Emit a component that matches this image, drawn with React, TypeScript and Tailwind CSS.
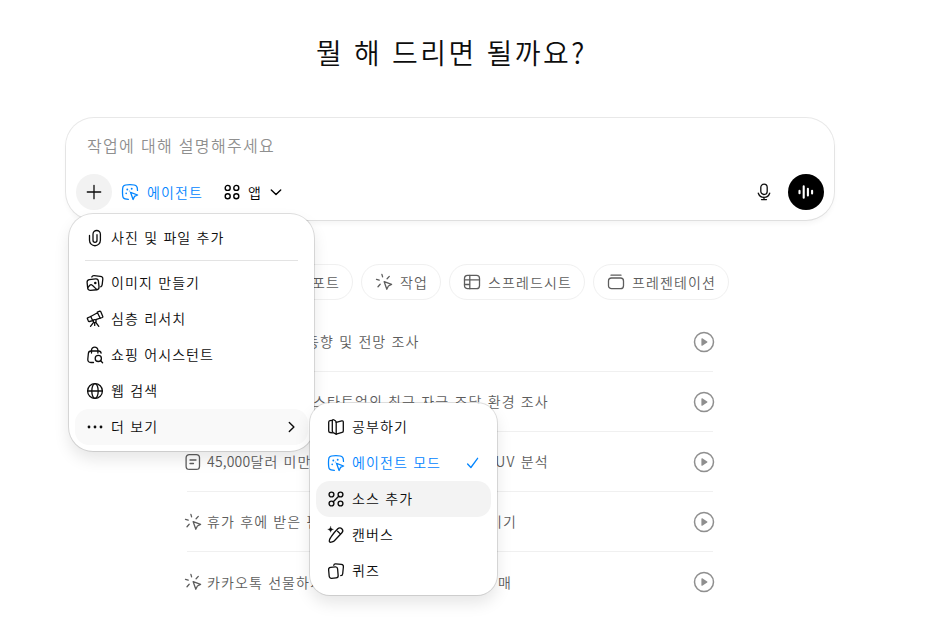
import React from "react";

type IconProps = { className?: string };

function Svg({ className = "", children, w = 1.3 }: { className?: string; children: React.ReactNode; w?: number }) {
  return (
    <svg
      width="20"
      height="20"
      viewBox="0 0 20 20"
      fill="none"
      stroke="currentColor"
      strokeWidth={w}
      strokeLinecap="round"
      strokeLinejoin="round"
      className={`shrink-0 ${className}`}
    >
      {children}
    </svg>
  );
}

const PlusIcon = () => (
  <Svg w={1.3}>
    <path d="M10 3.3v13.4M3.3 10h13.4" />
  </Svg>
);

const AgentIcon = ({ className }: IconProps) => (
  <Svg className={className}>
    <path d="M8.400 17.300C5.200 17.200 4.200 16.900 3.400 15.900 2.500 14.800 2.500 13 2.500 10s0-4.800.9-5.900C4.400 2.800 6.300 2.700 10 2.700s5.400.1 6.500 1.400c.8.900 1 2.300 1 4.300" />
    <path d="m10.500 10.300 7.100 2.700-3.100 1.400-1.400 3.100z" />
    <g fill="currentColor" stroke="none">
      <circle cx="7.300" cy="7.500" r=".95" />
      <circle cx="11.700" cy="6.700" r=".95" />
      <circle cx="6.200" cy="11.400" r=".8" />
      <circle cx="9.300" cy="9" r=".5" />
    </g>
  </Svg>
);

const AppsIcon = () => (
  <Svg w={1.4}>
    <circle cx="5.700" cy="5.900" r="2.500" />
    <circle cx="14.300" cy="5.900" r="2.500" />
    <circle cx="5.700" cy="14.300" r="2.500" />
    <circle cx="14.300" cy="14.300" r="2.500" />
  </Svg>
);

const SourcesIcon = () => (
  <Svg w={1.4}>
    <circle cx="5.500" cy="5.500" r="2.400" />
    <circle cx="14.500" cy="5.500" r="2.400" />
    <circle cx="5.500" cy="14.500" r="2.400" />
    <circle cx="14.500" cy="14.500" r="2.400" />
    <path d="m7.300 12.700 5.400-5.400" />
  </Svg>
);

const ChevronDown = () => (
  <Svg w={1.4}>
    <path d="m5.300 8 4.700 4.500L14.700 8" />
  </Svg>
);

const ChevronRight = () => (
  <Svg w={1.4}>
    <path d="m7.300 5.400 4.600 4.600-4.600 4.600" />
  </Svg>
);

const CheckIcon = () => (
  <Svg>
    <path d="m4.600 11 3.300 3.500 6.700-9.200" />
  </Svg>
);

const MicIcon = () => (
  <Svg w={1.3}>
    <rect x="6.800" y="2.200" width="6.400" height="10.300" rx="3.200" />
    <path d="M4.300 11.200c.8 2.500 2.900 4.100 5.700 4.100s4.900-1.600 5.700-4.100M10 15.300v2.300M7.500 17.600h5" />
  </Svg>
);

const VoiceIcon = () => (
  <Svg w={2.1}>
    <path d="M3.500 8.900v2.400M7.700 4.400v11.400M11.900 6.800v6.600M16.100 8.800v2.600" />
  </Svg>
);

const ClipIcon = () => (
  <Svg>
    <path d="M4.500 7.500v4.800a5.400 5.400 0 0 0 10.900 0V6.200a3.700 3.700 0 0 0-7.400 0v6.100a2 2 0 0 0 4 0V6.700" />
  </Svg>
);

const ImagesIcon = () => (
  <Svg>
    <rect x="2.400" y="6.200" width="11.400" height="10.900" rx="2.600" transform="rotate(-6 8 12)" />
    <path d="M6.800 4c.4-1.100 1.200-1.500 2.400-1.400l6 .7c1.900.2 2.800 1.100 2.600 2.900l-.6 5.200c-.1 1.300-.6 2-1.500 2.400" />
    <path d="m2.800 14.600 2-2.300c.8-.8 1.700-.8 2.500 0l4.600 4.300" />
    <circle cx="10.300" cy="9.900" r=".6" fill="currentColor" />
  </Svg>
);

const TelescopeIcon = () => (
  <Svg>
    <path d="m5.700 7.500 6.800-3.700 2.700 5.400-7.400 2.500z" />
    <path d="m12.300 3.100 2.500-.9c.5-.1.700.1.900.4l2.100 4.900c.2.500 0 .8-.4 1l-2.200.7M5.700 7.500l-3 1.300c-.4.200-.5.600-.3 1l1 2.300c.2.400.6.500 1 .4l3.400-.8" />
    <circle cx="9.700" cy="12.100" r="1.500" fill="white" />
    <path d="m8.600 13.300-3.100 4M10.800 13.300l3 4M9.700 13.700v2.700" />
  </Svg>
);

const ShoppingIcon = () => (
  <Svg>
    <path d="M8.500 17.500H5.900c-2.100 0-3.300-1.200-3.100-3.200l.6-6c.2-1.600 1-2.300 2.600-2.300h7.600c1.500 0 2.300.7 2.500 2.100" />
    <path d="M6.500 8V5.300a3.200 3.200 0 0 1 6.400 0V8" />
    <circle cx="13.300" cy="13.400" r="3.100" />
    <path d="m15.600 15.700 2 2" />
  </Svg>
);

const GlobeIcon = () => (
  <Svg>
    <circle cx="10" cy="10" r="7.400" />
    <ellipse cx="10" cy="10" rx="3.200" ry="7.400" />
    <path d="M2.700 10h14.600" />
  </Svg>
);

const MoreIcon = () => (
  <Svg>
    <g fill="currentColor" stroke="none">
      <circle cx="4" cy="10" r="1.400" />
      <circle cx="10" cy="10" r="1.400" />
      <circle cx="16" cy="10" r="1.400" />
    </g>
  </Svg>
);

const BookIcon = () => (
  <Svg>
    <path d="M6.300 3.300 4 3.700c-.9.200-1.300.6-1.300 1.500v8.900c0 .9.400 1.300 1.300 1.400l2.300.4" />
    <path d="M6.300 4.100c0-1.400.7-1.800 1.800-1.100l1.200.8c.6.400.9.900.9 1.700v11.800l-3-1.700c-.6-.4-.9-.8-.9-1.600z" />
    <path d="m10.200 5.300 5.500-1.400c1-.2 1.600.2 1.600 1.200v8.800c0 .8-.4 1.300-1.200 1.500l-5.900 1.800" />
  </Svg>
);

const CanvasIcon = () => (
  <Svg>
    <path d="m8.300 7.500 3.500-3.700c1.200-1.200 2.800-1.300 4-.1s1.200 2.900.1 4.100l-7.500 8c-.8.800-3.600 1.700-4.600 1.400-.6-.2-.6-1.100-.4-2 .3-1.300.8-2.200 1.500-3z" />
    <path d="m11.600 6.300 2.700 2.600" />
    <path
      d="M4.600 1.500c.4 1.900 1 2.500 2.900 2.900-1.900.4-2.500 1-2.900 2.900-.4-1.900-1-2.500-2.900-2.900 1.900-.4 2.500-1 2.900-2.900z"
      fill="currentColor"
      strokeWidth=".3"
    />
  </Svg>
);

const QuizIcon = () => (
  <Svg>
    <rect x="2.900" y="6.100" width="9" height="11" rx="2.200" transform="rotate(-5 7.400 11.700)" />
    <path d="M7.800 4.300c.1-1.100.8-1.600 1.900-1.500l5.700.6c1.400.2 2.100.9 2 2.300l-.7 7c-.1 1.300-.8 1.900-2 1.900" />
  </Svg>
);

const TaskIcon = () => (
  <Svg w={1.300}>
    <path d="m10.200 9.700 7.400 2.700-3.200 1.600-1.600 3.200z" />
    <path d="M7.900 2.400l.7 2.500M2.500 7.300l2.700.9M15.300 4.400l-2.200 2.400M6.200 12.200l-2.200 2.500" />
  </Svg>
);

const SheetIcon = () => (
  <Svg w={1.3}>
    <rect x="2.500" y="3.300" width="15" height="13.400" rx="3" />
    <path d="M2.500 7.900h15M7.800 3.300v13.400M2.500 12.500h5.300" />
  </Svg>
);

const SlidesIcon = () => (
  <Svg w={1.3}>
    <rect x="2.500" y="6" width="15" height="10.700" rx="3" />
    <path d="M5 3.200h10" />
  </Svg>
);

const DocIcon = () => (
  <Svg w={1.3}>
    <rect x="3.100" y="2.600" width="13.400" height="14.800" rx="3.200" />
    <path d="M7 8h6M7 11.500h3.500" />
  </Svg>
);

const PlayIcon = () => (
  <svg width="22" height="22" viewBox="0 0 22 22" fill="none" className="shrink-0 text-[#8f8f8f]">
    <circle cx="11" cy="11" r="9.500" stroke="currentColor" strokeWidth="1.500" />
    <path d="M8.400 7.800v6.400c0 .5.500.8.900.5l4.900-3.100c.4-.3.400-.9 0-1.200l-4.900-3.100c-.4-.3-.9 0-.9.500z" fill="currentColor" />
  </svg>
);

function Chip({ icon, label, width }: { icon: React.ReactNode; label: string; width: string }) {
  return (
    <button className={`flex h-9 shrink-0 items-center gap-1.5 rounded-full border border-[#f0f0f0] pl-3 whitespace-nowrap ${width}`}>
      {icon}
      <span className="pb-px">{label}</span>
    </button>
  );
}

type RowProps = { icon: React.ReactNode; amount?: string; pre: string; post: string; width: string; last?: boolean };

function Row({ icon, amount, pre, post, width, last }: RowProps) {
  return (
    <li className={`flex h-15 items-center justify-between ${last ? "" : "border-b border-[#f0f0f0]"}`}>
      <div className="-ml-1 flex items-center gap-1 whitespace-nowrap">
        {icon}
        <div className="flex pb-px">
          <span className={`overflow-hidden ${width}`}>
            {amount && <span className="tracking-[0.2px]">{amount}</span>}
            {pre}
          </span>
          <span>{post}</span>
        </div>
      </div>
      <div className="-mr-0.5">
        <PlayIcon />
      </div>
    </li>
  );
}

function Item({ icon, label, end, className = "" }: { icon: React.ReactNode; label: string; end?: React.ReactNode; className?: string }) {
  return (
    <div className={`flex h-9 items-center rounded-[14px] px-2.5 whitespace-nowrap ${className}`}>
      {icon}
      <span className="ml-1.5 flex-1 pb-0.5">{label}</span>
      {end}
    </div>
  );
}

export default function App() {
  return (
    <div className="relative h-[643px] w-[925px] overflow-hidden bg-white font-['Noto_Sans_CJK_KR',sans-serif] text-sm font-[350] tracking-[1.1px] text-[#0d0d0d] [word-spacing:1px]">
      <main className="flex w-[900px] flex-col items-center">
        <h1 className="mt-[31px] h-[87px] pl-[3px] text-[28px] leading-[42px] tracking-[2.5px]">뭘 해 드리면 될까요?</h1>

        <section className="flex h-[102px] w-[768px] flex-col rounded-[28px] px-2.5 shadow-[0_0_0_1px_rgba(0,0,0,0.09),0_4px_5px_rgba(0,0,0,0.04)]">
          <p className="mt-[15px] pl-[11px] text-base leading-6 tracking-[1.3px] text-[#8f8f8f]">작업에 대해 설명해주세요</p>
          <div className="mt-[17px] flex h-9 items-center">
            <button className="flex size-9 items-center justify-center rounded-full bg-[#f2f2f2]">
              <PlusIcon />
            </button>
            <button className="ml-2 flex w-[98px] items-center gap-1.5 text-[#0285ff]">
              <AgentIcon />
              <span className="pb-px pl-px whitespace-nowrap">에이전트</span>
            </button>
            <button className="ml-1 flex items-center text-black">
              <AppsIcon />
              <span className="ml-1.5 pb-px">앱</span>
              <span className="ml-1">
                <ChevronDown />
              </span>
            </button>
            <div className="ml-auto flex items-center gap-3.5">
              <MicIcon />
              <button className="flex size-9 items-center justify-center rounded-full bg-black text-white">
                <VoiceIcon />
              </button>
            </div>
          </div>
        </section>

        <div className="mt-11 flex gap-2 text-[#5d5d5d]">
          <Chip icon={<DocIcon />} label="추천" width="w-20" />
          <Chip icon={<DocIcon />} label="리포트" width="w-[94px]" />
          <Chip icon={<TaskIcon />} label="작업" width="w-20" />
          <Chip icon={<SheetIcon />} label="스프레드시트" width="w-[136px]" />
          <Chip icon={<SlidesIcon />} label="프레젠테이션" width="w-[136px]" />
        </div>

        <ul className="mt-3 w-[526px] text-[#5d5d5d]">
          <Row icon={<DocIcon />} pre="글로벌 시장" post="동향 및 전망 조사" width="w-[99px]" />
          <Row icon={<DocIcon />} pre="국내 기술" post="스타트업의 최근 자금 조달 환경 조사" width="w-[106px]" />
          <Row icon={<DocIcon />} amount="45,000" pre="달러 미만 전기차 및 전기" post="SUV 분석" width="w-[279px]" />
          <Row icon={<TaskIcon />} pre="휴가 후에 받은 편지를 모두 읽고 옮" post="기기" width="w-[282px]" />
          <Row icon={<TaskIcon />} pre="카카오톡 선물하기에서 생일 선물 구" post="매" width="w-[291px]" last />
        </ul>
      </main>

      <div className="absolute top-[214px] left-[69px] w-[245px] rounded-[24px] bg-white p-1.5 shadow-[0_0_0_1px_rgba(0,0,0,0.12),0_8px_16px_rgba(0,0,0,0.1)]">
        <Item icon={<ClipIcon />} label="사진 및 파일 추가" />
        <div className="mx-2.5 my-1 h-px bg-[#e3e3e3]" />
        <Item icon={<ImagesIcon />} label="이미지 만들기" />
        <Item icon={<TelescopeIcon />} label="심층 리서치" />
        <Item icon={<ShoppingIcon />} label="쇼핑 어시스턴트" />
        <Item icon={<GlobeIcon />} label="웹 검색" />
        <Item icon={<MoreIcon />} label="더 보기" className="bg-[#f9f9f9] pr-1.5" end={<ChevronRight />} />
      </div>

      <div className="absolute top-[403px] left-[310px] w-[187px] rounded-[20px] bg-white p-1.5 shadow-[0_0_0_1px_rgba(0,0,0,0.12),0_8px_16px_rgba(0,0,0,0.1)]">
        <Item icon={<BookIcon />} label="공부하기" />
        <Item icon={<AgentIcon />} label="에이전트 모드" className="pr-2 text-[#0285ff]" end={<CheckIcon />} />
        <Item icon={<SourcesIcon />} label="소스 추가" className="bg-[#f3f3f3]" />
        <Item icon={<CanvasIcon />} label="캔버스" />
        <Item icon={<QuizIcon />} label="퀴즈" />
      </div>
    </div>
  );
}
